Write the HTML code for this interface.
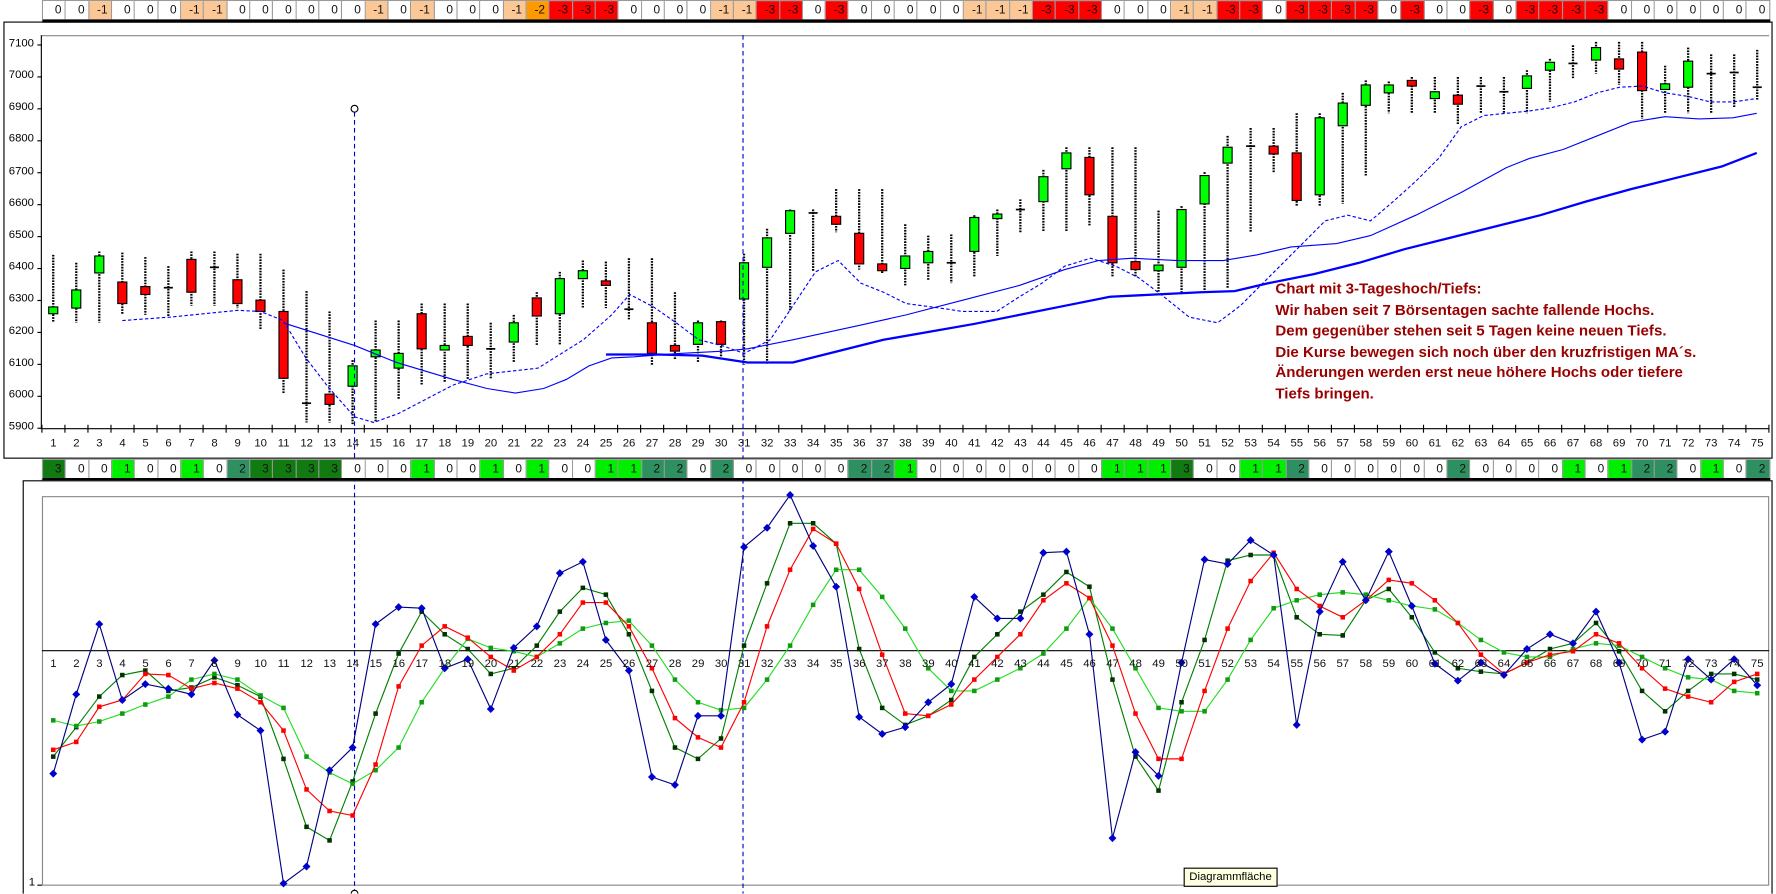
<!DOCTYPE html>
<html><head><meta charset="utf-8">
<style>
html,body{margin:0;padding:0;background:#fff;overflow:hidden;width:1776px;height:893px}
#root{position:absolute;left:0;top:0;width:1568px;height:789px;transform:scale(1.13265);transform-origin:0 0;font-family:"Liberation Sans",Arial,sans-serif;color:#000}
.row{position:absolute;left:37px;display:flex;height:16px;border-top:1px solid #999;border-left:1px solid #999}
.row span{width:20.33px;box-sizing:border-box;border-right:1px solid #999;text-align:right;padding-right:3px;font-size:10.5px;line-height:16px;color:#111}
.w{background:#fff}.p{background:#fbc795}.o{background:#ff9900}.r{background:#ff0000}
.g1{background:#00ee00}.g2{background:#2e9060}.g3{background:#117a11}
.lab{position:absolute;left:37px;display:flex;font-size:10px;color:#111}
.lab span{width:20.33px;text-align:center}
.yl{position:absolute;font-size:10px;text-align:right;width:30px;left:0}
#txt{position:absolute;left:1126px;top:246px;font-size:13.3px;font-weight:bold;color:#9a0000;line-height:18.6px;white-space:nowrap}
#tip{position:absolute;left:1045px;top:766px;background:#ffffe1;border:1px solid #000;font-size:10px;padding:1px 4px;line-height:13px}
</style></head><body><div id="root">
<svg id="s" width="1568" height="789" style="position:absolute;left:0;top:0"></svg>

<div class="row" style="top:0;border-bottom:3px solid #000">
<span class="w">0</span><span class="w">0</span><span class="p">-1</span><span class="w">0</span><span class="w">0</span><span class="w">0</span><span class="p">-1</span><span class="p">-1</span><span class="w">0</span><span class="w">0</span><span class="w">0</span><span class="w">0</span><span class="w">0</span><span class="w">0</span><span class="p">-1</span><span class="w">0</span><span class="p">-1</span><span class="w">0</span><span class="w">0</span><span class="w">0</span><span class="p">-1</span><span class="o">-2</span><span class="r">-3</span><span class="r">-3</span><span class="r">-3</span><span class="w">0</span><span class="w">0</span><span class="w">0</span><span class="w">0</span><span class="p">-1</span><span class="p">-1</span><span class="r">-3</span><span class="r">-3</span><span class="w">0</span><span class="r">-3</span><span class="w">0</span><span class="w">0</span><span class="w">0</span><span class="w">0</span><span class="w">0</span><span class="p">-1</span><span class="p">-1</span><span class="p">-1</span><span class="r">-3</span><span class="r">-3</span><span class="r">-3</span><span class="w">0</span><span class="w">0</span><span class="w">0</span><span class="p">-1</span><span class="p">-1</span><span class="r">-3</span><span class="r">-3</span><span class="w">0</span><span class="r">-3</span><span class="r">-3</span><span class="r">-3</span><span class="r">-3</span><span class="w">0</span><span class="r">-3</span><span class="w">0</span><span class="w">0</span><span class="r">-3</span><span class="w">0</span><span class="r">-3</span><span class="r">-3</span><span class="r">-3</span><span class="r">-3</span><span class="w">0</span><span class="w">0</span><span class="w">0</span><span class="w">0</span><span class="w">0</span><span class="w">0</span><span class="w">0</span>
</div>

<div class="row" style="top:405px;border-bottom:2px solid #000">
<span class="g3">3</span><span class="w">0</span><span class="w">0</span><span class="g1">1</span><span class="w">0</span><span class="w">0</span><span class="g1">1</span><span class="w">0</span><span class="g2">2</span><span class="g3">3</span><span class="g3">3</span><span class="g3">3</span><span class="g3">3</span><span class="w">0</span><span class="w">0</span><span class="w">0</span><span class="g1">1</span><span class="w">0</span><span class="w">0</span><span class="g1">1</span><span class="w">0</span><span class="g1">1</span><span class="w">0</span><span class="w">0</span><span class="g1">1</span><span class="g1">1</span><span class="g2">2</span><span class="g2">2</span><span class="w">0</span><span class="g2">2</span><span class="w">0</span><span class="w">0</span><span class="w">0</span><span class="w">0</span><span class="w">0</span><span class="g2">2</span><span class="g2">2</span><span class="g1">1</span><span class="w">0</span><span class="w">0</span><span class="w">0</span><span class="w">0</span><span class="w">0</span><span class="w">0</span><span class="w">0</span><span class="w">0</span><span class="g1">1</span><span class="g1">1</span><span class="g1">1</span><span class="g3">3</span><span class="w">0</span><span class="w">0</span><span class="g1">1</span><span class="g1">1</span><span class="g2">2</span><span class="w">0</span><span class="w">0</span><span class="w">0</span><span class="w">0</span><span class="w">0</span><span class="w">0</span><span class="g2">2</span><span class="w">0</span><span class="w">0</span><span class="w">0</span><span class="w">0</span><span class="g1">1</span><span class="w">0</span><span class="g1">1</span><span class="g2">2</span><span class="g2">2</span><span class="w">0</span><span class="g1">1</span><span class="w">0</span><span class="g2">2</span>
</div>

<div class="lab" style="top:386px"><span>1</span><span>2</span><span>3</span><span>4</span><span>5</span><span>6</span><span>7</span><span>8</span><span>9</span><span>10</span><span>11</span><span>12</span><span>13</span><span>14</span><span>15</span><span>16</span><span>17</span><span>18</span><span>19</span><span>20</span><span>21</span><span>22</span><span>23</span><span>24</span><span>25</span><span>26</span><span>27</span><span>28</span><span>29</span><span>30</span><span>31</span><span>32</span><span>33</span><span>34</span><span>35</span><span>36</span><span>37</span><span>38</span><span>39</span><span>40</span><span>41</span><span>42</span><span>43</span><span>44</span><span>45</span><span>46</span><span>47</span><span>48</span><span>49</span><span>50</span><span>51</span><span>52</span><span>53</span><span>54</span><span>55</span><span>56</span><span>57</span><span>58</span><span>59</span><span>60</span><span>61</span><span>62</span><span>63</span><span>64</span><span>65</span><span>66</span><span>67</span><span>68</span><span>69</span><span>70</span><span>71</span><span>72</span><span>73</span><span>74</span><span>75</span></div>
<div class="lab" style="top:581px"><span>1</span><span>2</span><span>3</span><span>4</span><span>5</span><span>6</span><span>7</span><span>8</span><span>9</span><span>10</span><span>11</span><span>12</span><span>13</span><span>14</span><span>15</span><span>16</span><span>17</span><span>18</span><span>19</span><span>20</span><span>21</span><span>22</span><span>23</span><span>24</span><span>25</span><span>26</span><span>27</span><span>28</span><span>29</span><span>30</span><span>31</span><span>32</span><span>33</span><span>34</span><span>35</span><span>36</span><span>37</span><span>38</span><span>39</span><span>40</span><span>41</span><span>42</span><span>43</span><span>44</span><span>45</span><span>46</span><span>47</span><span>48</span><span>49</span><span>50</span><span>51</span><span>52</span><span>53</span><span>54</span><span>55</span><span>56</span><span>57</span><span>58</span><span>59</span><span>60</span><span>61</span><span>62</span><span>63</span><span>64</span><span>65</span><span>66</span><span>67</span><span>68</span><span>69</span><span>70</span><span>71</span><span>72</span><span>73</span><span>74</span><span>75</span></div>

<div class="yl" style="top:33px">7100</div>
<div class="yl" style="top:61px">7000</div>
<div class="yl" style="top:89px">6900</div>
<div class="yl" style="top:117px">6800</div>
<div class="yl" style="top:146px">6700</div>
<div class="yl" style="top:174px">6600</div>
<div class="yl" style="top:202px">6500</div>
<div class="yl" style="top:230px">6400</div>
<div class="yl" style="top:258px">6300</div>
<div class="yl" style="top:287px">6200</div>
<div class="yl" style="top:315px">6100</div>
<div class="yl" style="top:343px">6000</div>
<div class="yl" style="top:371px">5900</div>
<div class="yl" style="top:774px;width:31px">1</div>

<div id="txt">Chart mit 3-Tageshoch/Tiefs:<br>Wir haben seit 7 Börsentagen sachte fallende Hochs.<br>Dem gegenüber stehen seit 5 Tagen keine neuen Tiefs.<br>Die Kurse bewegen sich noch über den kruzfristigen MA´s.<br>Änderungen werden erst neue höhere Hochs oder tiefere<br>Tiefs bringen.</div>
<div id="tip">Diagrammfläche</div>
</div>
<script>
var s=document.getElementById('s'),h='';
function X(i){return 47+(i-1)*20.33}
// frames
h+='<rect x="3.5" y="19.5" width="1561" height="385" fill="none" stroke="#000"/>';
h+='<line x1="37" y1="31.5" x2="1562" y2="31.5" stroke="#888"/>';
h+='<line x1="36.5" y1="31" x2="36.5" y2="378" stroke="#000"/>';
h+='<line x1="36" y1="378.5" x2="1562" y2="378.5" stroke="#000"/>';
for(var v=0;v<=12;v++){var y=39.7+v*28.2;h+='<line x1="33" y1="'+y+'" x2="37" y2="'+y+'" stroke="#000"/>';}
for(var i=0;i<=75;i++){var x=37+i*20.33;h+='<line x1="'+x+'" y1="375" x2="'+x+'" y2="382" stroke="#000"/>';}
h+='<rect x="20.5" y="424.5" width="1544" height="380" fill="none" stroke="#000"/>';
h+='<rect x="37.5" y="438.5" width="1524" height="343" fill="none" stroke="#888"/>';
h+='<line x1="37" y1="574.5" x2="1562" y2="574.5" stroke="#000"/>';
h+='<line x1="33" y1="781.5" x2="37" y2="781.5" stroke="#000"/>';
// candles [wickTop,wickBot,bodyTop,bodyBot,type] type g/r/d
var C=[[225,285,271,277,'g'],[232,285,256,272,'g'],[222,285,226,241,'g'],[223,278,249,268,'r'],[227,278,253,260,'r'],[235,280,254,254,'d'],[222,270,229,258,'r'],[222,270,236,236,'d'],[224,272,247,268,'r'],[224,291,265,275,'r'],[238,347,275,334,'r'],[257,373,356,356,'d'],[275,373,348,357,'r'],[318,375,323,341,'g'],[283,373,309,315,'g'],[283,352,312,325,'g'],[268,340,277,308,'r'],[268,338,305,309,'g'],[268,335,297,305,'r'],[285,335,308,308,'d'],[278,320,285,302,'g'],[258,305,263,279,'r'],[240,305,246,277,'g'],[230,272,239,246,'g'],[231,272,248,252,'r'],[228,282,273,273,'d'],[228,322,285,312,'r'],[258,318,305,310,'r'],[283,320,285,304,'g'],[283,315,284,304,'r'],[224,322,232,264,'g'],[202,322,210,236,'g'],[185,275,186,206,'g'],[185,240,188,188,'d'],[167,205,191,198,'r'],[167,238,206,233,'r'],[167,242,233,239,'r'],[198,252,226,237,'g'],[208,248,222,232,'g'],[207,250,232,232,'d'],[190,245,192,222,'g'],[185,226,189,193,'g'],[176,205,185,185,'d'],[150,205,156,178,'g'],[130,205,135,149,'g'],[130,200,139,172,'r'],[130,244,191,232,'r'],[130,244,231,238,'r'],[186,258,234,239,'g'],[182,258,185,236,'g'],[152,258,155,180,'g'],[120,255,130,144,'g'],[113,205,129,129,'d'],[113,152,129,136,'r'],[100,182,135,177,'r'],[100,182,104,172,'g'],[82,180,91,111,'g'],[71,155,75,93,'g'],[72,100,75,82,'g'],[68,100,71,76,'r'],[68,100,81,87,'g'],[68,110,84,92,'r'],[68,100,76,76,'d'],[68,100,81,81,'d'],[62,100,67,78,'g'],[52,90,55,62,'g'],[40,70,56,56,'d'],[37,65,42,53,'g'],[37,75,52,61,'r'],[37,105,46,80,'r'],[58,100,74,79,'g'],[42,100,54,77,'g'],[48,100,65,65,'d'],[48,95,64,64,'d'],[44,88,77,77,'d']];
C.forEach(function(c,k){var x=X(k+1);
h+='<line x1="'+x+'" y1="'+c[0]+'" x2="'+x+'" y2="'+c[1]+'" stroke="#000" stroke-width="2" stroke-dasharray="1.5,1"/>';
if(c[4]=='d')h+='<line x1="'+(x-4)+'" y1="'+c[2]+'" x2="'+(x+4)+'" y2="'+c[2]+'" stroke="#000" stroke-width="1.5"/>';
else h+='<rect x="'+(x-4)+'" y="'+c[2]+'" width="8" height="'+Math.max(3,c[3]-c[2])+'" fill="'+(c[4]=='g'?'#00ff00':'#ff0000')+'" stroke="#000"/>';});
function pl(p,st){return '<polyline fill="none" points="'+p.join(' ')+'" '+st+'/>';}
var d1=[108,283,150,280,210,274,230,275,250,283,270,316,290,342,313,368,330,373,352,365,400,340,430,330,475,325,515,300,540,278,556,260,577,271,597,285,617,300,637,305,657,312,680,300,700,270,720,240,740,230,760,250,780,258,800,268,830,272,850,275,880,275,900,262,920,250,940,235,963,228,985,235,1005,245,1025,260,1050,280,1075,285,1095,270,1110,255,1130,235,1150,215,1170,195,1190,190,1210,195,1230,178,1250,160,1270,140,1290,112,1310,102,1330,100,1350,98,1370,95,1390,90,1410,82,1430,77,1450,76,1470,82,1490,85,1510,90,1530,90,1551,87];
var d2=[250,285,313,305,350,320,400,335,430,343,455,347,480,343,500,335,520,323,540,316,560,315,600,312,640,310,660,308,700,300,760,287,800,278,850,265,900,252,940,238,970,230,1000,228,1040,230,1080,230,1110,225,1140,218,1180,215,1210,208,1250,190,1290,170,1330,148,1350,140,1380,132,1410,120,1440,108,1470,103,1500,105,1530,104,1551,100];
var d3=[535,313,580,313,620,314,660,320,700,320,740,310,780,300,820,293,860,286,900,278,940,270,980,262,1020,260,1060,258,1090,257,1120,250,1160,242,1200,232,1240,220,1280,210,1320,200,1360,190,1400,178,1440,167,1480,157,1520,147,1551,135];
h+=pl(d1,'stroke="#0000ff" stroke-dasharray="3,2"');
h+=pl(d2,'stroke="#0000ff"');
h+=pl(d3,'stroke="#0000ff" stroke-width="2"');
// vertical dashed
h+='<line x1="313" y1="99" x2="313" y2="789" stroke="#0000cc" stroke-dasharray="4,3"/>';
h+='<circle cx="313" cy="96" r="3" fill="#fff" stroke="#000"/>';
h+='<line x1="656" y1="31" x2="656" y2="789" stroke="#0000cc" stroke-dasharray="4,3"/>';
// lower series
var S=[
[[668,642,615,596,592,610,607,598,605,615,670,730,742,690,630,577,540,560,573,595,590,570,540,519,525,560,610,660,670,652,570,515,462,462,480,573,625,640,632,618,580,560,540,525,505,518,600,668,698,620,565,495,490,490,545,560,561,530,520,545,576,590,593,595,585,573,568,550,575,610,628,610,595,595,600],'#008000','#003300','s'],
[[636,641,637,630,622,615,600,595,600,614,625,668,682,692,680,660,620,590,564,572,575,580,568,555,550,548,570,600,620,627,625,600,570,534,503,503,527,555,590,610,610,600,590,577,555,528,555,590,625,628,628,600,565,537,530,525,523,525,530,535,538,550,565,576,580,580,573,568,570,580,590,598,600,610,612],'#22dd22','#119911','s'],
[[662,655,624,618,595,596,608,603,608,620,645,697,716,720,675,606,570,553,563,580,592,580,560,532,532,553,590,634,651,660,620,553,503,467,480,520,578,630,632,622,600,580,560,530,515,528,570,630,670,670,610,555,513,488,520,535,545,530,512,515,530,550,578,595,585,578,575,560,568,590,608,615,620,602,595],'#ff0000','#ff0000','s'],
[[683,613,551,618,604,608,613,583,631,645,780,765,680,660,551,536,537,590,582,626,572,553,506,496,565,592,686,693,632,632,483,466,437,482,518,633,648,642,620,604,527,546,546,488,487,560,740,664,685,585,494,498,477,490,640,540,496,530,487,535,586,601,585,596,573,560,568,540,585,653,646,582,600,582,605],'#000080','#0000cc','d']];
S.forEach(function(se){var p=[];se[0].forEach(function(v,k){p.push(X(k+1),v);});
h+=pl(p,'stroke="'+se[1]+'"');
se[0].forEach(function(v,k){var x=X(k+1);
if(se[3]=='d')h+='<path d="M'+x+' '+(v-3.5)+'L'+(x+3.5)+' '+v+'L'+x+' '+(v+3.5)+'L'+(x-3.5)+' '+v+'Z" fill="'+se[2]+'"/>';
else h+='<rect x="'+(x-2)+'" y="'+(v-2)+'" width="4" height="4" fill="'+se[2]+'"/>';});});
h+='<circle cx="313" cy="789" r="3" fill="#fff" stroke="#000"/>';
s.innerHTML=h;
</script>
</body></html>
